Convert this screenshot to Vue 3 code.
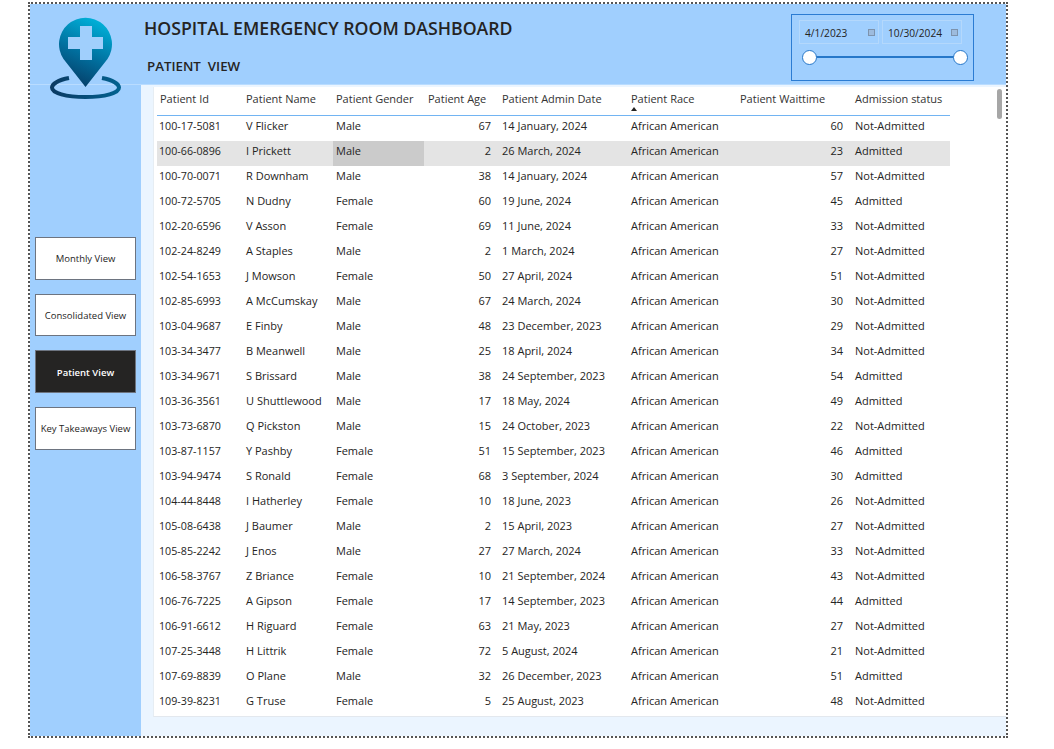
<template>
  <div class="frame">
    <header class="top">
      <svg class="logo" width="76" height="86" viewBox="0 0 76 86">
        <defs>
          <linearGradient id="pinGrad" x1="0.75" y1="0" x2="0.4" y2="1">
            <stop offset="0" stop-color="#00b5dd" />
            <stop offset="0.55" stop-color="#01709f" />
            <stop offset="1" stop-color="#053e68" />
          </linearGradient>
          <linearGradient id="ringGrad" x1="0" y1="0" x2="1" y2="0">
            <stop offset="0" stop-color="#0a3a63" />
            <stop offset="1" stop-color="#02618f" />
          </linearGradient>
        </defs>
        <path d="M37.5 72 L15.5 44 A26.5 26.5 0 1 1 59.5 44 Z" fill="url(#pinGrad)" />
        <path d="M32 11 H44 V22 H55 V34 H44 V45 H32 V34 H20 V22 H32 Z" fill="#a0cffc" />
        <path d="M21 63 C10 65 4 69 4 72.5 C4 78 18 82 37.5 82 C57 82 71 78 71 72.5 C71 69 65 65 54 63" fill="none" stroke="url(#ringGrad)" stroke-width="4" />
      </svg>
      <div class="titles">
        <h1>HOSPITAL EMERGENCY ROOM DASHBOARD</h1>
        <h2>PATIENT&nbsp; VIEW</h2>
      </div>
      <div class="slicer">
        <div class="dates">
          <div class="date" v-for="d in dates" :key="d">
            <span>{{ d }}</span>
            <i class="cal"></i>
          </div>
        </div>
        <div class="slider">
          <b class="knob"></b>
          <b class="knob"></b>
        </div>
      </div>
    </header>

    <div class="main">
      <aside class="side">
        <button v-for="v in views" :key="v" class="nav" :class="{ active: v === 'Patient View' }">{{ v }}</button>
      </aside>
      <section class="panel">
        <div class="sheet">
          <div class="scroll"></div>
          <div class="row head">
            <div v-for="c in columns" :key="c">
              {{ c }}
              <i v-if="c === 'Patient Race'" class="sort"></i>
            </div>
          </div>
          <div v-for="(r, i) in rows" :key="r[0]" class="row" :class="{ hl: i === 1 }">
            <div class="c-id">{{ r[0] }}</div>
            <div>{{ r[1] }}</div>
            <div class="c-gender">{{ r[2] }}</div>
            <div class="num">{{ r[3] }}</div>
            <div>{{ r[4] }}</div>
            <div>African American</div>
            <div class="num">{{ r[5] }}</div>
            <div class="c-status">{{ r[6] }}</div>
          </div>
        </div>
      </section>
    </div>
  </div>
</template>

<script setup>
const dates = ['4/1/2023', '10/30/2024']
const views = ['Monthly View', 'Consolidated View', 'Patient View', 'Key Takeaways View']
const columns = [
  'Patient Id', 'Patient Name', 'Patient Gender', 'Patient Age',
  'Patient Admin Date', 'Patient Race', 'Patient Waittime', 'Admission status'
]

const N = 'Not-Admitted'
const A = 'Admitted'
const rows = [
  ['100-17-5081', 'V Flicker', 'Male', 67, '14 January, 2024', 60, N],
  ['100-66-0896', 'I Prickett', 'Male', 2, '26 March, 2024', 23, A],
  ['100-70-0071', 'R Downham', 'Male', 38, '14 January, 2024', 57, N],
  ['100-72-5705', 'N Dudny', 'Female', 60, '19 June, 2024', 45, A],
  ['102-20-6596', 'V Asson', 'Female', 69, '11 June, 2024', 33, N],
  ['102-24-8249', 'A Staples', 'Male', 2, '1 March, 2024', 27, N],
  ['102-54-1653', 'J Mowson', 'Female', 50, '27 April, 2024', 51, N],
  ['102-85-6993', 'A McCumskay', 'Male', 67, '24 March, 2024', 30, N],
  ['103-04-9687', 'E Finby', 'Male', 48, '23 December, 2023', 29, N],
  ['103-34-3477', 'B Meanwell', 'Male', 25, '18 April, 2024', 34, N],
  ['103-34-9671', 'S Brissard', 'Male', 38, '24 September, 2023', 54, A],
  ['103-36-3561', 'U Shuttlewood', 'Male', 17, '18 May, 2024', 49, A],
  ['103-73-6870', 'Q Pickston', 'Male', 15, '24 October, 2023', 22, N],
  ['103-87-1157', 'Y Pashby', 'Female', 51, '15 September, 2023', 46, A],
  ['103-94-9474', 'S Ronald', 'Female', 68, '3 September, 2024', 30, A],
  ['104-44-8448', 'I Hatherley', 'Female', 10, '18 June, 2023', 26, N],
  ['105-08-6438', 'J Baumer', 'Male', 2, '15 April, 2023', 27, N],
  ['105-85-2242', 'J Enos', 'Male', 27, '27 March, 2024', 33, N],
  ['106-58-3767', 'Z Briance', 'Female', 10, '21 September, 2024', 43, N],
  ['106-76-7225', 'A Gipson', 'Female', 17, '14 September, 2023', 44, A],
  ['106-91-6612', 'H Riguard', 'Female', 63, '21 May, 2023', 27, N],
  ['107-25-3448', 'H Littrik', 'Female', 72, '5 August, 2024', 21, N],
  ['107-69-8839', 'O Plane', 'Male', 32, '26 December, 2023', 51, A],
  ['109-39-8231', 'G Truse', 'Female', 5, '25 August, 2023', 48, N]
]
</script>

<style>
body {
  background: #fff;
}
</style>

<style scoped>
.frame {
  width: 980px;
  height: 736px;
  margin: 2px 0 0 28px;
  box-sizing: border-box;
  border: 2px dotted #555;
  display: flex;
  flex-direction: column;
  font-family: "Open Sans", "Noto Sans", sans-serif;
  color: #252423;
  position: relative;
}
.top {
  height: 80px;
  flex: none;
  background: #a0cffe;
  border-bottom: 1px solid #b9dcff;
  position: relative;
  display: flex;
  justify-content: space-between;
}
.logo {
  position: absolute;
  left: 18px;
  top: 11px;
  z-index: 2;
}
.titles {
  margin-left: 114px;
}
h1 {
  margin: 12px 0 0;
  font-size: 17.7px;
  line-height: 24px;
  font-weight: 600;
  white-space: nowrap;
}
h2 {
  margin: 17px 0 0 3px;
  font-size: 13.3px;
  line-height: 18px;
  font-weight: 600;
}
.slicer {
  width: 183px;
  height: 67px;
  box-sizing: border-box;
  margin: 10px 32px 0 0;
  border: 1px solid #2b7cd3;
  padding: 5px 7px;
}
.dates {
  display: flex;
  gap: 3px;
}
.date {
  width: 80px;
  height: 24px;
  box-sizing: border-box;
  border: 1px solid #b4d8fc;
  display: flex;
  align-items: center;
  justify-content: space-between;
  padding: 0 3px 0 5px;
  font-size: 10.2px;
}
.date span {
  padding-top: 2px;
}
.cal {
  width: 7px;
  height: 7px;
  box-sizing: border-box;
  background: #9dbbdd;
  border: 1px solid #7d93ad;
}
.slider {
  height: 2px;
  background: #2677c9;
  margin: 12px 5px 0 10px;
  display: flex;
  justify-content: space-between;
  align-items: center;
}
.knob {
  width: 15px;
  height: 15px;
  box-sizing: border-box;
  border-radius: 50%;
  background: #fff;
  border: 1px solid #2677c9;
  flex: none;
  margin: 0 -7px;
}
.main {
  flex: 1;
  display: flex;
  min-height: 0;
}
.side {
  width: 111px;
  flex: none;
  background: #a0cffe;
  box-sizing: border-box;
  padding: 152px 0 0 5px;
  display: flex;
  flex-direction: column;
  gap: 14px;
}
.nav {
  width: 101px;
  height: 42.67px;
  box-sizing: border-box;
  background: #fff;
  border: 1px solid #6d7480;
  padding: 1px 0 0;
  font-family: inherit;
  font-size: 9.5px;
  font-weight: 500;
  color: #252423;
}
.nav.active {
  background: #252423;
  color: #fff;
  font-weight: 600;
}
.panel {
  flex: 1;
  background: #ebf5ff;
  padding: 2px 0 19px 12px;
  min-width: 0;
  display: flex;
}
.sheet {
  flex: 1;
  background: #fff;
  border-left: 1px solid #e6edf3;
  border-bottom: 1px solid #e3e8ee;
  padding: 0 0 0 3px;
  position: relative;
  overflow: hidden;
  box-sizing: border-box;
}
.scroll {
  position: absolute;
  right: 4px;
  top: 2px;
  width: 5px;
  height: 30px;
  background: #a6a6a6;
  border-radius: 3px;
}
.row {
  display: grid;
  grid-template-columns: 86px 90px 91px 75px 129px 108px 115px 99px;
  width: 793px;
  height: 25px;
  align-items: stretch;
  font-size: 11px;
  line-height: 20px;
  white-space: nowrap;
}
.row > div {
  padding-left: 3px;
}
.row .c-id {
  padding-left: 2px;
  font-size: 10.7px;
}
.row .num {
  padding: 0 8px 0 0;
  text-align: right;
}
.row .c-status {
  padding-left: 4px;
}
.head {
  height: 29px;
  line-height: 24px;
  border-bottom: 1px solid #72b4f2;
  box-sizing: border-box;
  color: #333;
}
.head > div {
  position: relative;
}
.head > div:first-child {
  padding-left: 3px;
}
.head > div:nth-child(4),
.head > div:nth-child(7),
.head > div:nth-child(8) {
  padding-left: 4px;
}
.sort {
  position: absolute;
  left: 3px;
  top: 20px;
  width: 0;
  height: 0;
  border: 3.5px solid transparent;
  border-top: 0;
  border-bottom: 4px solid #252423;
}
.hl {
  background: #e4e4e4;
}
.hl .c-gender {
  background: #cbcbcb;
}
</style>
